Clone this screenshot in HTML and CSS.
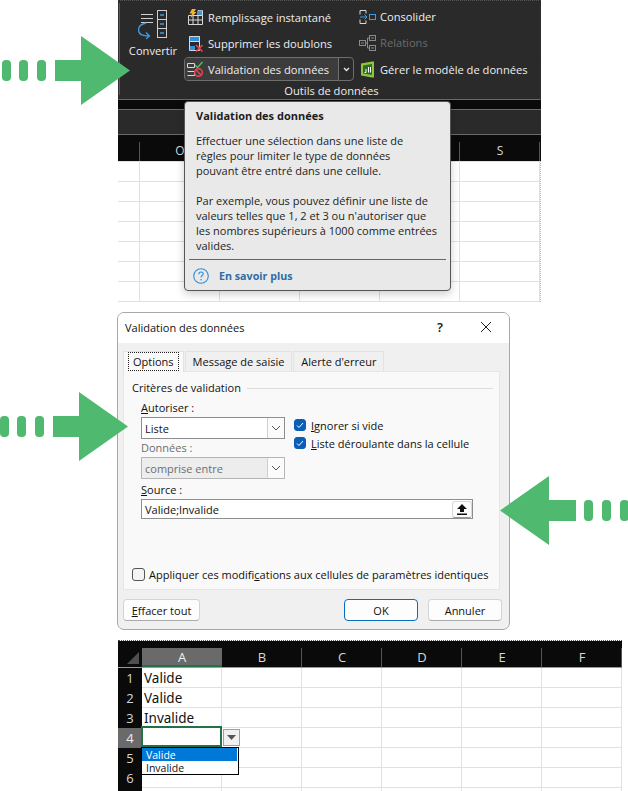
FILE: index.html
```html
<!DOCTYPE html>
<html lang="fr">
<head>
    <meta charset="UTF-8">
    <meta name="viewport" content="width=device-width, initial-scale=1.0">
    <title>Validation des données</title>
    <link rel="stylesheet" href="styles.css">
</head>
<body>
    <!-- Green arrows sit over the page -->
    <svg class="arrow arrow-one" width="130" height="70" viewBox="0 0 130 70"><path d="M55 24H81V0L130 34.500L81 69V45H55Z"/><rect x="2" y="24" width="9" height="21" rx="4"/><rect x="19" y="24" width="9" height="21" rx="4"/><rect x="37" y="24" width="9" height="21" rx="4"/></svg>
    <svg class="arrow arrow-two" width="130" height="70" viewBox="0 0 130 70"><path d="M53 24H79V0L128 34.500L79 69V45H53Z"/><rect x="0" y="24" width="9" height="21" rx="4"/><rect x="17" y="24" width="9" height="21" rx="4"/><rect x="35" y="24" width="9" height="21" rx="4"/></svg>
    <svg class="arrow arrow-three" width="128" height="70" viewBox="0 0 128 70"><path d="M76 24H49V0L0 34.500L49 69V45H76Z"/><rect x="84" y="24" width="9" height="21" rx="4"/><rect x="102" y="24" width="9" height="21" rx="4"/><rect x="120" y="24" width="9" height="21" rx="4"/></svg>

    <!-- Ribbon + tooltip -->
    <section class="excel-top">
        <div class="ribbon">
            <div class="ribbon-tools">
                <div class="tool-big">
                    <svg width="30" height="29" viewBox="0 0 30 29" fill="none">
                        <path d="M3 4.500H15M3 8.500H15M3 12.500H15" stroke="#d0d0d0"/>
                        <rect x="19.500" y="0.500" width="9" height="27" stroke="#d0d0d0"/>
                        <path d="M19.500 9.500H28.500M19.500 18.500H28.500" stroke="#d0d0d0"/>
                        <path d="M22 5H26M22 14H26M22 23H26" stroke="#3f9be0" stroke-width="1.500"/>
                        <path d="M8 13C3 14 0.500 17 0.500 20C0.500 24 4 26 11 26M8 22.500L11.500 26L8 29" stroke="#3f9be0" stroke-width="1.300"/>
                    </svg>
                    <span>Convertir</span>
                </div>
                <div class="tool-col">
                    <div class="tool">
                        <svg width="17" height="16" viewBox="0 0 17 16" fill="none">
                            <path d="M1.500 6.500H15.500V15.500H1.500ZM1.500 11H15.500M6 6.500V15.500M11 1.500V15.500M11 1.500H15.500V6.500" stroke="#d8d8d8"/>
                            <path d="M11.500 1.500H15V6H11.500Z" fill="#3f9be0"/>
                            <path d="M5 0H9L7 3H9.500L3.500 9L5 4.500H2.500Z" fill="#f2b233"/>
                        </svg>
                        <span>Remplissage instantané</span>
                    </div>
                    <div class="tool">
                        <svg width="17" height="17" viewBox="0 0 17 17" fill="none">
                            <path d="M2 1H13V6H2Z" fill="#2f8fe0"/>
                            <path d="M2.500 1.500H12.500V15.500H2.500ZM2.500 6.500H12.500" stroke="#d8d8d8"/>
                            <path d="M3 11H8V15H3Z" fill="#2f8fe0"/>
                            <path d="M9 10L15.500 16.500M15.500 10L9 16.500" stroke="#e8434e" stroke-width="1.600"/>
                        </svg>
                        <span>Supprimer les doublons</span>
                    </div>
                    <div class="tool-split">
                        <div class="tool tool-active">
                            <svg width="17" height="16" viewBox="0 0 17 16" fill="none">
                                <path d="M0.500 2.500H7.500V6.500H0.500ZM0.500 10.500H7.500V14.500H0.500" stroke="#d8d8d8"/>
                                <path d="M8 4L10.500 6.500L15.500 1" stroke="#4cc264" stroke-width="1.400"/>
                                <circle cx="11.500" cy="11.500" r="3.800" stroke="#e8434e" stroke-width="1.500"/>
                                <path d="M8.800 8.800L14.200 14.200" stroke="#e8434e" stroke-width="1.500"/>
                            </svg>
                            <span>Validation des données</span>
                        </div>
                        <div class="split-arrow">
                            <svg width="7" height="5" viewBox="0 0 7 5" fill="none"><path d="M1 1L3.500 3.500L6 1" stroke="#e8e8e8" stroke-width="1.300"/></svg>
                        </div>
                    </div>
                </div>
                <div class="tool-col tool-col-right">
                    <div class="tool">
                        <svg width="17" height="14" viewBox="0 0 17 14" fill="none">
                            <path d="M1 0.500H7V3.500M7 10.500V13.500H1V9.500M1 4.500V0.500" stroke="#d8d8d8"/>
                            <path d="M1 7H8M5.500 4.500L8 7L5.500 9.500" stroke="#3f9be0"/>
                            <rect x="10.500" y="4.500" width="6" height="5" stroke="#3f9be0"/>
                        </svg>
                        <span>Consolider</span>
                    </div>
                    <div class="tool tool-off">
                        <svg width="17" height="16" viewBox="0 0 17 16" fill="none" stroke="#8a8a8a">
                            <rect x="0.500" y="5.500" width="6" height="5"/>
                            <rect x="10.500" y="0.500" width="6" height="5"/>
                            <rect x="10.500" y="10.500" width="6" height="5"/>
                            <path d="M6.500 8H8.500M8.500 3V13M8.500 3H10.500M8.500 13H10.500M2 8H5M12 3H15M12 13H15"/>
                        </svg>
                        <span>Relations</span>
                    </div>
                    <div class="tool">
                        <svg width="17" height="17" viewBox="0 0 17 17" fill="none">
                            <path d="M2 2.500L13 0.500H15V16.500H13L2 14.500Z" fill="#8cc63f"/>
                            <path d="M4 4.500L13 3V14L4 12.500Z" fill="#2d6a2a"/>
                            <path d="M7 8V11.500H5.500M9.500 6V11.500M11.500 6V11.500" stroke="#fff"/>
                        </svg>
                        <span>Gérer le modèle de données</span>
                    </div>
                </div>
            </div>
            <div class="ribbon-label">Outils de données</div>
        </div>
        <div class="strip"></div>
        <div class="formula-bar"></div>
        <div class="col-heads col-heads-top">
            <div class="col-head"></div>
            <div class="col-head">O</div>
            <div class="col-head"></div>
            <div class="col-head"></div>
            <div class="col-head"></div>
            <div class="col-head">S</div>
        </div>
        <div class="grid-top"></div>

        <div class="tooltip">
            <h3>Validation des données</h3>
            <p>Effectuer une sélection dans une liste de<br>règles pour limiter le type de données<br>pouvant être entré dans une cellule.</p>
            <p>Par exemple, vous pouvez définir une liste de<br>valeurs telles que 1, 2 et 3 ou n'autoriser que<br>les nombres supérieurs à 1000 comme entrées<br>valides.</p>
            <div class="tooltip-link">
                <svg width="16" height="16" viewBox="0 0 16 16" fill="none"><circle cx="8" cy="8" r="7.300" stroke="#2f8fd8" stroke-width="1.100"/><path d="M5.800 6.200C5.800 4.800 6.800 4 8 4C9.300 4 10.200 4.800 10.200 5.900C10.200 7.600 8 7.500 8 9.500" stroke="#2f8fd8" stroke-width="1.100"/><circle cx="8" cy="11.700" r="0.800" fill="#2f8fd8"/></svg>
                <span>En savoir plus</span>
            </div>
        </div>
    </section>

    <!-- Dialog -->
    <section class="dialog">
        <div class="dialog-title">
            <span class="dialog-name">Validation des données</span>
            <span class="dialog-help">?</span>
            <svg width="12" height="12" viewBox="0 0 12 12" fill="none"><path d="M1 1L11 11M11 1L1 11" stroke="#222" stroke-width="1"/></svg>
        </div>
        <div class="tabs">
            <div class="tab tab-active"><span>Options</span></div>
            <div class="tab">Message de saisie</div>
            <div class="tab">Alerte d'erreur</div>
        </div>
        <div class="panel">
            <div class="legend"><span>Critères de validation</span></div>
            <div class="fields">
                <div class="fields-row">
                    <div class="fields-left">
                        <div class="field-label"><u>A</u>utoriser :</div>
                        <div class="select">
                            <span>Liste</span>
                            <div class="select-btn"><svg width="10" height="6" viewBox="0 0 10 6" fill="none"><path d="M1 1L5 5L9 1" stroke="#555"/></svg></div>
                        </div>
                        <div class="field-label field-off">Données :</div>
                        <div class="select select-off">
                            <span>comprise entre</span>
                            <div class="select-btn"><svg width="10" height="6" viewBox="0 0 10 6" fill="none"><path d="M1 1L5 5L9 1" stroke="#555"/></svg></div>
                        </div>
                    </div>
                    <div class="checks">
                        <div class="check-row"><div class="check check-on"><svg width="8" height="7" viewBox="0 0 8 7" fill="none"><path d="M1 3.500L3 5.500L7 1" stroke="#fff"/></svg></div><span><u>I</u>gnorer si vide</span></div>
                        <div class="check-row"><div class="check check-on"><svg width="8" height="7" viewBox="0 0 8 7" fill="none"><path d="M1 3.500L3 5.500L7 1" stroke="#fff"/></svg></div><span><u>L</u>iste déroulante dans la cellule</span></div>
                    </div>
                </div>
                <div class="field-label field-source"><u>S</u>ource :</div>
                <div class="source">
                    <span>Valide;Invalide</span>
                    <div class="source-btn"><svg width="10" height="11" viewBox="0 0 10 11"><path d="M5 0L10 5H7V8H3V5H0ZM0 9.500H10V11H0Z" fill="#111"/></svg></div>
                </div>
            </div>
            <div class="apply-row"><div class="check"></div><span>Appliquer ces modifi<u>c</u>ations aux cellules de paramètres identiques</span></div>
        </div>
        <div class="dialog-buttons">
            <button class="btn btn-clear"><u>E</u>ffacer tout</button>
            <button class="btn btn-ok">OK</button>
            <button class="btn">Annuler</button>
        </div>
    </section>

    <!-- Sheet with the dropdown -->
    <section class="sheet">
        <div class="col-heads">
            <div class="corner"><svg width="12" height="12" viewBox="0 0 12 12"><path d="M12 0V12H0Z" fill="#4f4f4f"/></svg></div>
            <div class="col-head col-head-active">A</div>
            <div class="col-head">B</div>
            <div class="col-head">C</div>
            <div class="col-head">D</div>
            <div class="col-head">E</div>
            <div class="col-head">F</div>
        </div>
        <div class="sheet-body">
            <div class="row-heads">
                <div class="row-head">1</div>
                <div class="row-head">2</div>
                <div class="row-head">3</div>
                <div class="row-head row-head-active">4</div>
                <div class="row-head">5</div>
                <div class="row-head">6</div>
            </div>
            <div class="cells">
                <div class="cell">Valide</div>
                <div class="cell">Valide</div>
                <div class="cell">Invalide</div>
                <div class="cell-active"></div>
                <div class="drop-btn"><svg width="9" height="5" viewBox="0 0 9 5"><path d="M0 0H9L4.500 5Z" fill="#555"/></svg></div>
                <div class="drop-list">
                    <div class="drop-item drop-item-on">Valide</div>
                    <div class="drop-item">Invalide</div>
                </div>
            </div>
        </div>
    </section>
</body>
</html>
```

FILE: styles.css
```css
body {
    margin: 0;
    height: 791px;
    overflow: hidden;
    position: relative;
    background: #fff;
    font-family: "Open Sans", sans-serif;
    font-size: 11px;
    color: #111;
}
svg {
    display: block;
    flex: none;
}
.arrow {
    position: absolute;
    fill: #4fb96f;
    z-index: 2;
}
.arrow-one {
    left: 0;
    top: 36px;
}
.arrow-two {
    left: 0;
    top: 392px;
}
.arrow-three {
    left: 500px;
    top: 476px;
}

/* ---- top screenshot ---- */
.excel-top {
    position: relative;
    width: 423px;
    height: 302px;
    margin-left: 118px;
    box-sizing: border-box;
}
.ribbon {
    height: 100px;
    box-sizing: border-box;
    background: #2a2a2a linear-gradient(#5a5a5a, #5a5a5a) 0 2px / 1px 92px no-repeat;
    border-top: 1px dotted #555;
    border-left: 1px dotted #333;
    border-right: 1px dotted #333;
    border-bottom: 1px solid #6b6b6b;
    color: #eee;
    font-size: 11.150px;
}
.ribbon-tools {
    display: flex;
    height: 81px;
}
.tool-big {
    width: 62px;
    display: flex;
    flex-direction: column;
    align-items: center;
    padding-top: 9px;
    box-sizing: border-box;
    gap: 4px;
    margin-left: 3px;
}
.tool-col {
    display: flex;
    flex-direction: column;
    width: 170px;
    padding-top: 3px;
}
.tool-col-right {
    width: 180px;
    margin-left: 2px;
}
.tool {
    display: flex;
    align-items: center;
    gap: 4px;
    height: 26px;
    padding-left: 3px;
    white-space: nowrap;
}
.tool-off {
    color: #6c6c6c;
}
.tool-split {
    display: flex;
    height: 24px;
    border: 1px solid #6e6e6e;
    border-radius: 4px;
    box-sizing: border-box;
    margin-top: 1px;
}
.tool-split .tool {
    height: 22px;
    width: 151px;
    padding-left: 2px;
    background: #3c3c3c;
    border-right: 1px solid #6e6e6e;
    border-radius: 3px 0 0 3px;
}
.tool-col-right .tool:last-child {
    margin-top: 1px;
}
.split-arrow {
    flex: 1;
    display: flex;
    align-items: center;
    justify-content: center;
}
.ribbon-label {
    text-align: center;
    padding-left: 4px;
    line-height: 18px;
    color: #eee;
}
.strip {
    height: 9px;
    background: #0a0a0a;
    border-bottom: 1px solid #6b6b6b;
}
.formula-bar {
    height: 24px;
    background: #2a2a2a;
    border-bottom: 1px solid #6b6b6b;
}
.col-heads {
    display: flex;
    height: 26px;
    background: #0a0a0a;
    color: #d8d8d8;
}
.col-head {
    width: 80px;
    text-align: center;
    line-height: 32px;
    font-size: 12px;
    background: linear-gradient(#555, #555) right bottom / 1px 19px no-repeat;
}
.col-heads-top .col-head:first-child {
    width: 22px;
}
.grid-top {
    height: 141px;
    background-color: #fff;
    background-image: linear-gradient(#e0e0e0 1px, transparent 1px), linear-gradient(90deg, #e0e0e0 1px, transparent 1px);
    background-size: 80px 20px;
    background-position: 21px 20px;
    border-right: 1px dotted #bbb;
}
.tooltip {
    position: absolute;
    left: 66px;
    top: 101px;
    width: 267px;
    height: 190px;
    box-sizing: border-box;
    background: #e9e9e9;
    border: 1px solid #555;
    border-radius: 4px;
    box-shadow: 0 3px 8px rgba(0, 0, 0, 0.2);
    padding: 6px 11px 0;
    color: #1d1d1d;
    z-index: 1;
}
.tooltip h3 {
    margin: 0 0 10px;
    font-size: 11px;
    line-height: 15px;
}
.tooltip p {
    margin: 0 0 15px;
    line-height: 15px;
}
.tooltip-link {
    display: flex;
    align-items: center;
    gap: 10px;
    margin: -9px -7px 0;
    padding: 8px 4px 0;
    border-top: 1px solid #666;
    color: #2e6da4;
    font-size: 10.700px;
    font-weight: 700;
}

/* ---- dialog ---- */
.dialog {
    width: 393px;
    height: 318px;
    box-sizing: border-box;
    margin: 10px 0 0 117px;
    background: #f0f0f0;
    border: 1px solid #a8a8a8;
    border-radius: 7px;
    overflow: hidden;
}
.dialog-title {
    display: flex;
    align-items: center;
    height: 28px;
    padding: 0 17px 2px 7px;
    background: #fff;
}
.dialog-name {
    flex: 1;
}
.dialog-help {
    margin-right: 37px;
    font-size: 13px;
    font-weight: 600;
}
.tabs {
    display: flex;
    height: 20px;
    margin: 8px 0 0 5px;
    gap: 1px;
}
.tab {
    padding: 0 7px;
    background: #f0f0f0;
    border: 1px solid #e2e2e2;
    border-bottom: none;
    line-height: 20px;
    white-space: nowrap;
}
.tab-active {
    background: #f9f9f9;
    padding: 0 4px;
    margin-bottom: -1px;
}
.tab-active span {
    border: 1px dotted #222;
    padding: 1px 4px;
}
.panel {
    height: 219px;
    box-sizing: border-box;
    margin: 0 9px 0 5px;
    padding: 8px 6px 0 8px;
    background: #f9f9f9;
    border: 1px solid #e6e6e6;
}
.legend {
    display: flex;
    align-items: center;
    gap: 6px;
    line-height: 16px;
    white-space: nowrap;
}
.legend::after {
    content: "";
    flex: 1;
    height: 1px;
    background: #dcdcdc;
}
.fields {
    padding-left: 9px;
    width: 332px;
}
.fields-row {
    display: flex;
    gap: 9px;
}
.fields-left {
    width: 144px;
}
.field-label {
    height: 14px;
    line-height: 14px;
    margin: 5px 0 2px;
}
.field-off {
    color: #6d6d6d;
    margin-top: 2px;
}
.field-source {
    margin-top: 4px;
}
.select {
    display: flex;
    align-items: center;
    justify-content: space-between;
    height: 22px;
    box-sizing: border-box;
    background: #fff;
    border: 1px solid #8e8e8e;
    padding-left: 3px;
}
.select-off {
    background: #ededed;
    border-color: #b5b5b5;
    color: #6d6d6d;
}
.select-btn {
    display: flex;
    align-items: center;
    justify-content: center;
    width: 16px;
    height: 20px;
    background: #fbfbfb;
    border-left: 1px solid #cfcfcf;
}
.checks {
    padding-top: 20px;
}
.check-row {
    display: flex;
    align-items: center;
    gap: 5px;
    height: 18px;
    white-space: nowrap;
}
.check {
    display: flex;
    align-items: center;
    justify-content: center;
    width: 13px;
    height: 13px;
    box-sizing: border-box;
    border: 1px solid #555;
    border-radius: 3px;
    background: #f4f4f4;
}
.check-on {
    width: 12px;
    height: 12px;
    background: #0a5fb4;
    border-color: #0a5fb4;
}
.source {
    display: flex;
    align-items: center;
    justify-content: space-between;
    height: 20px;
    box-sizing: border-box;
    background: #fff;
    border: 1px solid #8e8e8e;
    padding-left: 3px;
}
.source-btn {
    display: flex;
    align-items: center;
    justify-content: center;
    width: 20px;
    height: 17px;
    box-sizing: border-box;
    background: #fdfdfd;
    border: 1px solid #d8d8d8;
    border-bottom-color: #999;
    border-radius: 3px;
}
.apply-row {
    display: flex;
    align-items: center;
    gap: 4px;
    margin-top: 48px;
    white-space: nowrap;
}
.dialog-buttons {
    display: flex;
    gap: 10px;
    margin: 9px 7px 0 5px;
}
.btn {
    width: 74px;
    height: 22px;
    padding: 0;
    background: #fdfdfd;
    border: 1px solid #d4d4d4;
    border-bottom-color: #aaa;
    border-radius: 4px;
    font: inherit;
    color: #111;
}
.btn-clear {
    width: 77px;
    margin-right: 134px;
}
.btn-ok {
    border: 1px solid #0a6cbd;
}

/* ---- bottom sheet ---- */
.sheet {
    width: 504px;
    margin: 10px 0 0 118px;
    border-top: 1px dotted #555;
}
.sheet .col-heads {
    border-bottom: 1px solid #9a9a9a;
}
.corner {
    width: 24px;
    display: flex;
    align-items: flex-end;
    justify-content: flex-end;
    padding: 0 3px 3px 0;
    box-sizing: border-box;
}
.sheet .col-head {
    line-height: 33px;
    font-size: 13px;
}
.sheet .col-head-active {
    background: linear-gradient(#6a6a6a, #6a6a6a) bottom / 100% 19px no-repeat;
    box-shadow: inset 0 -2px 0 #217346;
    color: #eee;
}
.sheet-body {
    display: flex;
}
.row-heads {
    width: 24px;
    background: #0a0a0a;
    color: #d8d8d8;
}
.row-head {
    height: 20px;
    line-height: 20px;
    text-align: center;
    font-size: 13px;
}
.row-head-active {
    background: #6a6a6a;
    color: #eee;
}
.cells {
    position: relative;
    flex: 1;
    height: 123px;
    background-color: #fff;
    background-image: linear-gradient(#e0e0e0 1px, transparent 1px), linear-gradient(90deg, #e0e0e0 1px, transparent 1px);
    background-size: 80px 20px;
    background-position: -1px -1px;
}
.cell {
    height: 20px;
    line-height: 20px;
    padding-left: 2px;
    font-family: "Noto Sans", sans-serif;
    font-size: 13.500px;
    color: #111;
}
.cell-active {
    position: absolute;
    left: -1px;
    top: 58px;
    width: 77px;
    height: 17px;
    border: 2px solid #217346;
    background: #fff;
}
.drop-btn {
    position: absolute;
    left: 81px;
    top: 61px;
    width: 15px;
    height: 15px;
    display: flex;
    align-items: center;
    justify-content: center;
    background: #f0f0f0;
    border: 1px solid #a0a0a0;
}
.drop-list {
    position: absolute;
    left: -1px;
    top: 79px;
    width: 95px;
    height: 26px;
    padding-right: 1px;
    background: #fff;
    border: 1px solid #000;
}
.drop-item {
    height: 13px;
    line-height: 15px;
    padding-left: 4px;
    font-size: 10.500px;
    overflow: hidden;
}
.drop-item-on {
    background: #0078d7;
    color: #fff;
}
```
